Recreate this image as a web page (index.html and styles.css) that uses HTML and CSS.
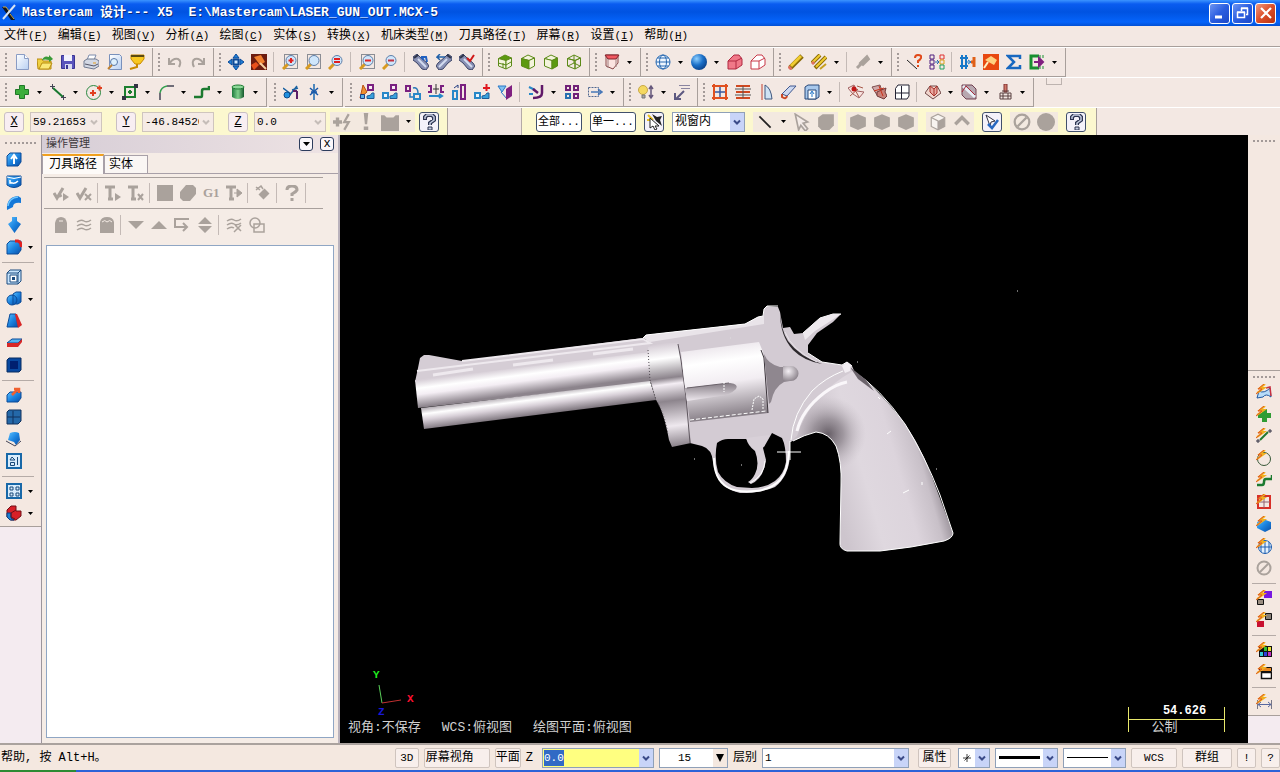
FILE: index.html
```
<!DOCTYPE html>
<html lang="zh-CN">
<head>
    <meta charset="UTF-8">
    <title>Mastercam 设计--- X5</title>
    <meta name="viewport" content="width=device-width, initial-scale=1">
    <link rel="stylesheet" href="styles.css">
    <script src="toolbars.js" defer></script>
</head>
<body>
<svg class="defs" aria-hidden="true">
    <defs>
        <linearGradient id="blue" x2="1" y2="1">
            <stop offset="0" stop-color="#5cc0ff"/>
            <stop offset="0.500" stop-color="#1c84e0"/>
            <stop offset="1" stop-color="#0a4fa8"/>
        </linearGradient>
        <linearGradient id="green" x2="1" y2="0">
            <stop offset="0" stop-color="#1d7a3c"/>
            <stop offset="0.5" stop-color="#7fd08c"/>
            <stop offset="1" stop-color="#14582c"/>
        </linearGradient>
        <linearGradient id="paper" x2="1" y2="1">
            <stop offset="0" stop-color="#ffffff"/>
            <stop offset="1" stop-color="#b9d0f2"/>
        </linearGradient>
        <radialGradient id="ball" cx="0.35" cy="0.3" r="0.8">
            <stop offset="0" stop-color="#8fd0ff"/>
            <stop offset="0.5" stop-color="#1c70c8"/>
            <stop offset="1" stop-color="#083a80"/>
        </radialGradient>
    </defs>
</svg>

<header class="title">
    <svg class="logo" viewBox="0 0 16 18">
        <path d="M1 3h4l9 13h-4z" fill="#10141c"/>
        <path d="M14 1L2 15" stroke="#d8e4f4" stroke-width="2"/>
        <path d="M2 3h3l3 4M9 10l4 5" stroke="#c9a84a" fill="none"/>
    </svg>
    <h1>Mastercam 设计--- X5&nbsp; E:\Mastercam\LASER_GUN_OUT.MCX-5</h1>
    <div class="window-buttons">
        <button aria-label="最小化"><svg viewBox="0 0 18 18"><path d="M4 13h7" stroke="#fff" stroke-width="3"/></svg></button>
        <button aria-label="还原"><svg viewBox="0 0 18 18"><path d="M3.500 8.500h7v5h-7zM3 8h8M7.500 7V4.500h6v6H12M7 4h7" stroke="#fff" fill="none" stroke-width="1.500"/></svg></button>
        <button class="close" aria-label="关闭"><svg viewBox="0 0 18 18"><path d="M4 4l10 10M14 4L4 14" stroke="#fff" stroke-width="2.200"/></svg></button>
    </div>
</header>

<nav class="menu">
    <a href="#">文件<span>(<u>F</u>)</span></a>
    <a href="#">编辑<span>(<u>E</u>)</span></a>
    <a href="#">视图<span>(<u>V</u>)</span></a>
    <a href="#">分析<span>(<u>A</u>)</span></a>
    <a href="#">绘图<span>(<u>C</u>)</span></a>
    <a href="#">实体<span>(<u>S</u>)</span></a>
    <a href="#">转换<span>(<u>X</u>)</span></a>
    <a href="#">机床类型<span>(<u>M</u>)</span></a>
    <a href="#">刀具路径<span>(<u>T</u>)</span></a>
    <a href="#">屏幕<span>(<u>R</u>)</span></a>
    <a href="#">设置<span>(<u>I</u>)</span></a>
    <a href="#">帮助<span>(<u>H</u>)</span></a>
</nav>

<div class="row">
    <div class="bar" data-tools="new open save print preview verify"></div>
    <div class="bar" data-tools="undo redo"></div>
    <div class="bar" data-tools="fit repaint | zoomwin zoomtarget zoomin | zoomout zoomhalf | tube tubeleft tubecheck"></div>
    <div class="bar" data-tools="viewtop viewfront viewright viewiso"></div>
    <div class="bar" data-tools="cplane+"></div>
    <div class="bar" data-tools="wire+ shade+ solidred outlinered"></div>
    <div class="bar" data-tools="erase eraseall+ | unerase+"></div>
    <div class="bar" data-tools="query analyze | connect paint sum run+"></div>
</div>

<div class="row row-second">
    <div class="bar" data-tools="point+ line+ circle+ rect+ fillet+ spline+ cylinder+"></div>
    <div class="bar" data-tools="trim break+"></div>
    <div class="bar" data-tools="xdynamic xmove xrotate xmirror xscale xoffset xproject | xroll+ array xstretch+"></div>
    <div class="bar" data-tools="bulb+ note"></div>
    <div class="bar" data-tools="net ruled revolve sweep extrude+ | patch trimsurf mesh | blend+ cut+ tower+"></div>
    <span class="stub"></span>
</div>

<div class="row ribbon">
    <form class="ribbon-bar coords">
        <div class="coord"><button type="button" class="key"><u>X</u></button><span class="combo off"><input aria-label="X" value="59.21653"><button type="button" data-icon="chev" aria-label="X 列表"></button></span></div>
        <div class="coord"><button type="button" class="key"><u>Y</u></button><span class="combo off"><input aria-label="Y" value="-46.84520"><button type="button" data-icon="chev" aria-label="Y 列表"></button></span></div>
        <div class="coord"><button type="button" class="key"><u>Z</u></button><span class="combo off"><input aria-label="Z" value="0.0"><button type="button" data-icon="chev" aria-label="Z 列表"></button></span></div>
        <div class="cells" data-tools="fastpoint bang config+"></div>
        <button type="button" class="box" data-icon="help" aria-label="帮助"></button>
    </form>
    <div class="ribbon-gap"></div>
    <form class="ribbon-bar picks">
        <button type="button" class="wide">全部...</button>
        <button type="button" class="wide">单一...</button>
        <button type="button" class="box" data-icon="magic" aria-label="选择"></button>
        <span class="combo window"><select aria-label="选择方式"><option>视窗内</option></select><button type="button" data-icon="chev" aria-label="展开"></button></span>
        <div class="cells" data-tools="slash+ pick grayblock"></div>
        <div class="cells" data-tools="hex hex hex"></div>
        <div class="cells" data-tools="halfcube back"></div>
        <button type="button" class="box" data-icon="pickok" aria-label="验证选择"></button>
        <div class="cells" data-tools="ban disc"></div>
        <button type="button" class="box" data-icon="help" aria-label="帮助"></button>
    </form>
</div>

<main>
    <aside class="side left">
        <div class="bar vertical" data-tools="sextrude srevolve ssweep sloft sfillet+ | sshell sboolean+ sdraft strimsolid sthick | spull sgrid ssurf slayout | sfeature+ smachine+"></div>
    </aside>

    <section class="manager">
        <header>
            <h2>操作管理</h2>
            <button data-icon="down" aria-label="选项"></button>
            <button aria-label="关闭">x</button>
        </header>
        <div class="tabs">
            <button class="active">刀具路径</button>
            <button>实体</button>
        </div>
        <div class="ops" data-tools="checkall checknone | regen regenx | verifyop post g1 feed | tool | ask |"></div>
        <div class="ops" data-tools="lock waves lockall | tridown triup insert expand | wavex overlap"></div>
        <div class="tree"></div>
    </section>

    <section class="canvas">
        <svg class="scene" viewBox="340 135 908 608">
            <defs>
                <linearGradient id="tube" gradientUnits="userSpaceOnUse" x1="530" y1="366" x2="534" y2="397">
                    <stop offset="0" stop-color="#d8d0d8"/>
                    <stop offset="0.250" stop-color="#fff"/>
                    <stop offset="0.450" stop-color="#f4eef4"/>
                    <stop offset="0.850" stop-color="#8c848c"/>
                    <stop offset="1" stop-color="#8c848c"/>
                </linearGradient>
                <linearGradient id="under" gradientUnits="userSpaceOnUse" x1="530" y1="393" x2="533" y2="416">
                    <stop offset="0" stop-color="#a69ea6"/>
                    <stop offset="0.300" stop-color="#fff"/>
                    <stop offset="0.550" stop-color="#d8d0d8"/>
                    <stop offset="1" stop-color="#787078"/>
                </linearGradient>
                <linearGradient id="collar" gradientUnits="userSpaceOnUse" x1="660" y1="343" x2="673" y2="447">
                    <stop offset="0" stop-color="#d2c9d2"/>
                    <stop offset="0.150" stop-color="#fff"/>
                    <stop offset="0.340" stop-color="#8c848c"/>
                    <stop offset="0.400" stop-color="#f4eef4"/>
                    <stop offset="0.560" stop-color="#8d858d"/>
                    <stop offset="0.800" stop-color="#eee8ee"/>
                    <stop offset="1" stop-color="#8a828a"/>
                </linearGradient>
                <linearGradient id="drum" gradientUnits="userSpaceOnUse" x1="718" y1="347" x2="728" y2="418">
                    <stop offset="0" stop-color="#eee9ee"/>
                    <stop offset="0.200" stop-color="#fff"/>
                    <stop offset="0.500" stop-color="#f2edf2"/>
                    <stop offset="1" stop-color="#847c84"/>
                </linearGradient>
                <linearGradient id="slot" x2="0" y2="1">
                    <stop offset="0" stop-color="#857d85"/>
                    <stop offset="1" stop-color="#efe9ef"/>
                </linearGradient>
                <radialGradient id="knob" cx="0.35" cy="0.35" r="0.7">
                    <stop offset="0" stop-color="#f4eff4"/>
                    <stop offset="1" stop-color="#8c848c"/>
                </radialGradient>
                <linearGradient id="grip" gradientUnits="userSpaceOnUse" x1="826" y1="470" x2="938" y2="438">
                    <stop offset="0" stop-color="#cdc5cd"/>
                    <stop offset="0.300" stop-color="#dfd8df"/>
                    <stop offset="0.600" stop-color="#dcd4dc"/>
                    <stop offset="0.800" stop-color="#c8c0c8"/>
                    <stop offset="1" stop-color="#756d75"/>
                </linearGradient>
                <radialGradient id="web" gradientUnits="userSpaceOnUse" cx="828" cy="434" r="38">
                    <stop offset="0" stop-color="#665e66"/>
                    <stop offset="0.400" stop-color="#857d85" stop-opacity="0.700"/>
                    <stop offset="1" stop-color="#bdb5bd" stop-opacity="0"/>
                </radialGradient>
            </defs>
            <!-- frame with trigger guard -->
            <path fill="#d3cbd3" d="M646 335L745 324 758 317 763 316 764 309 767 306 778 307 780 312 783 328 790 327 794 334 803 333 820 318 833 314 841 314 833 322 817 333 808 345 808 353 822 362 842 365 847 362 852 366 858 380 840 400 800 438 790 442 790 455Q789 476 775 487 762 493 740 493 716 488 713 462 712 449 702 446L690 443 680 390 648 350z"/>
            <path fill="#e9e4e9" d="M643 338L646 335 745 324 758 317 764 316 764 324 650 342z"/>
            <path fill="none" stroke="#fff" d="M643 338l3-3 99-11 13-7 5-1 1-7 3-3h11M803 333l17-15 13-4h8M808 353l14 9 20 3 5-3 5 4"/>
            <path fill="#eee9ee" d="M803 333l17-15 13-4h8l-9 6-17 11-10 9z"/>
            <path d="M780 312Q781 330 788 341 800 357 822 364 804 361 793 350 780 336 780 312z" fill="#2c282c"/>
            <path d="M785 332Q792 350 817 362" stroke="#e8e2e8" fill="none"/>
            <!-- opening inside the guard and the trigger -->
            <path d="M717 443Q722 439 728 439L746 439 764 447 772 433 782 438Q786 446 786 462 784 474 775 481 765 488 752 488L737 487Q724 483 718 472 714 458 717 443z" fill="#000"/>
            <path d="M746 438Q748 446 755 451 760 464 755 474 752 480 748 482L751 484Q764 478 766 460L763 448 770 435z" fill="#d8d0d8"/>
            <path d="M765 461Q764 476 750 483" stroke="#fff" fill="none"/>
            <path d="M714 458Q714 479 727 487 737 493 756 491 772 489 780 480 788 471 789 451" fill="none" stroke="#fff" stroke-width="2"/>
            <!-- handle -->
            <path fill="url(#grip)" d="M790 442Q800 405 840 374L850 368Q875 386 899 416 921 444 935 485L953 533Q953 538 944 541 910 548 880 551L847 551Q839 549 840 542L841 485Q842 462 836 446 829 433 816 432 804 435 790 442z"/>
            <path fill="url(#web)" d="M790 442Q800 405 840 374L850 368Q875 386 899 416V485H841Q842 462 836 446 829 433 816 432 804 435 790 442z"/>
            <path fill="#d3cbd3" d="M790 442Q792 405 822 380L848 364 853 371Q810 395 797 436z"/>
            <path fill="none" stroke="#fff" d="M791 440Q793 413 812 391 825 378 843 371"/>
            <path fill="none" stroke="#faf7fa" stroke-width="3" d="M797 431Q802 410 824 393 836 384 847 382"/>
            <path fill="none" stroke="#fff" d="M853 371Q880 388 905 424 925 456 940 495L953 533Q953 538 944 541 910 548 880 551L847 551Q839 549 840 542L841 485Q842 462 836 446 829 433 816 432 804 435 793 441"/>
            <path d="M850 367l8 12 16 12-9-12z" fill="#6c646c"/>
            <path d="M842 366l5-4 4 3-1 6-5 2z" fill="#f2edf2"/>
            <path d="M887 434l4-3M903 493l6-3M922 482v3M878 397l2 2" stroke="#fff"/>
            <!-- barrel -->
            <path fill="#d5cdd5" d="M418 368L420 358 424 355 429 355 462 361 643 338 650 343 650 356 415 382z"/>
            <path d="M462 361L643 339 650 343 417 371" fill="none" stroke="#eee9ee" stroke-width="2"/>
            <path d="M433 375l40-6M513 365l40-5M593 354l40-5" stroke="#eee9ee" stroke-width="3"/>
            <path fill="url(#tube)" d="M415 380L650 352 652 382 418 408Z"/>
            <path fill="url(#under)" d="M421 408L650 381 656 400 424 429Z"/>
            <path fill="url(#collar)" d="M648 347Q660 342 678 343L684 380 691 443 672 447 669 440Q664 412 656 400L650 380z"/>
            <path d="M648 350l2 30 6 20q8 12 12 34" fill="none" stroke="#4f484f" stroke-dasharray="1 2"/>
            <path d="M678 344l3 16 5 37 4 46" fill="none" stroke="#5f575f"/>
            <!-- cylinder -->
            <path fill="url(#drum)" d="M681 352L759 342 763 352 768 413 690 422 684 380z"/>
            <path fill="url(#slot)" d="M685 388L730 383Q739 384 736 389 730 395 720 396L687 401z"/>
            <path d="M687 388l42-5" stroke="#6a626a"/>
            <path d="M690 420l76-9" stroke="#fff" stroke-dasharray="4 2"/>
            <path d="M752 410l2-11 5-3 4 3v10M724 382v10" stroke="#fff" stroke-dasharray="2 1" fill="none"/>
            <path d="M761 350l3 8 4 55" fill="none" stroke="#3c363c"/>
            <path d="M764 354Q768 364 780 367H790V381L784 382Q774 387 771 402L769 404z" fill="#8f878f"/>
            <path d="M783 366h8a7 7 0 0 1 0 15h-8z" fill="url(#knob)"/>
            <path d="M777 452h24M790 441v19" stroke="#fff"/>
            <path d="M1017 291h1M694 459h1M741 465h1M730 338h1M857 362h1M936 469h1" stroke="#ddd"/>
            <!-- view axes -->
            <path d="M382 703l-3-18" stroke="#5ad05a"/>
            <path d="M382 703l19-3" stroke="#c03030"/>
            <g class="axes">
                <text x="373" y="678" fill="#20f020">Y</text>
                <text x="407" y="702" fill="#ff1030">X</text>
                <text x="378" y="715" fill="#1818d8">Z</text>
            </g>
        </svg>
        <p class="plane-info"><span>视角:不保存</span><span>WCS:俯视图</span><span>绘图平面:俯视图</span></p>
        <div class="scale">
            <b>54.626</b>
            <i></i>
            <span>公制</span>
        </div>
    </section>

    <aside class="side right">
        <div class="bar vertical empty"></div>
        <div class="bar vertical" data-tools="asurf aplus aline acircle aspline anet acube aglobe ban | apurple ared | apalette awindow | adim"></div>
    </aside>
</main>

<footer class="status">
    <span class="hint">帮助, 按 Alt+H。</span>
    <button class="flat d3">3D</button>
    <button class="flat gview">屏幕视角</button>
    <button class="flat plane">平面</button>
    <label for="depth">Z</label>
    <span class="combo depth"><span class="field"><mark>0.0</mark><input id="depth"></span><button data-icon="chev" aria-label="Z 列表"></button></span>
    <span class="combo color"><input aria-label="颜色" value="15"><button data-icon="tri" aria-label="颜色列表"></button></span>
    <label for="level">层别</label>
    <span class="combo level"><input id="level" value="1"><button data-icon="chev" aria-label="层别列表"></button></span>
    <button class="flat attrs">属性</button>
    <span class="combo style"><button class="sample" data-icon="star" aria-label="点样式"></button><button data-icon="chev" aria-label="点样式列表"></button></span>
    <span class="combo thick"><button class="sample" aria-label="线宽"><i></i></button><button data-icon="chev" aria-label="线宽列表"></button></span>
    <span class="combo thin"><button class="sample" aria-label="线型"><i></i></button><button data-icon="chev" aria-label="线型列表"></button></span>
    <button class="flat wcs">WCS</button>
    <button class="flat groups">群组</button>
    <button class="flat mini">!</button>
    <button class="flat mini">?</button>
</footer>
<div class="taskbar"><span></span></div>
</body>
</html>
```

FILE: styles.css
```
* {
    box-sizing: border-box;
}

body {
    margin: 0;
    height: 100vh;
    display: flex;
    flex-direction: column;
    overflow: hidden;
    background: #f3e8e3;
    color: #000;
    font: 12px/16px "Liberation Mono", "Noto Sans CJK SC", monospace;
}

h1, h2, p {
    margin: 0;
}

button, input, select {
    font: inherit;
    color: inherit;
    margin: 0;
    padding: 0;
    border: 0;
    border-radius: 0;
    background: none;
    min-width: 0;
}

select {
    appearance: none;
}

svg {
    display: block;
    flex: none;
}

.defs {
    position: absolute;
    width: 0;
    height: 0;
}

/* title */
.title {
    display: flex;
    flex: none;
    align-items: center;
    height: 26px;
    padding: 0 4px 0 1px;
    background: linear-gradient(#3c94ff, #0a5cf0 4px, #0053e1 12px, #0564fb 22px, #0350d4);
    color: #fff;
}

.title .logo {
    width: 16px;
    height: 18px;
}

.title h1 {
    flex: 1;
    padding-left: 5px;
    font-size: 13px;
    font-weight: bold;
    text-shadow: 1px 1px #0a2c80;
    white-space: nowrap;
}

.window-buttons {
    display: flex;
    gap: 2px;
}

.window-buttons button {
    display: flex;
    align-items: center;
    justify-content: center;
    width: 21px;
    height: 21px;
    border: 1px solid #fff;
    border-radius: 3px;
    background: linear-gradient(135deg, #6d95f2, #2a5de0 50%, #1c48c8);
}

.window-buttons .close {
    background: linear-gradient(135deg, #f09a80, #dc4e28 50%, #b83210);
}

.window-buttons svg {
    width: 18px;
    height: 18px;
}

/* menu */
.menu {
    display: flex;
    flex: none;
    gap: 10px;
    height: 21px;
    padding: 2px 4px;
    border-bottom: 1px solid #a89f9b;
}

.menu a {
    color: inherit;
    text-decoration: none;
    white-space: nowrap;
}

.menu span {
    font-size: 11px;
}

/* toolbars */
.row {
    display: flex;
    flex: none;
    height: 30px;
    border-top: 1px solid #fff;
}

.row-second {
    gap: 2px;
}

.row-second .bar:nth-child(n+4) {
    margin-left: -2px;
}

.bar {
    position: relative;
    display: flex;
    align-items: center;
    padding: 0 4px 0 10px;
    border-right: 1px solid #a89f9b;
    border-bottom: 1px solid #a89f9b;
}

.bar::before {
    content: "";
    position: absolute;
    left: 5px;
    top: 5px;
    bottom: 5px;
    border-left: 2px dotted #a39a98;
}

.tool {
    display: flex;
    align-items: center;
}

.tool button {
    display: flex;
    align-items: center;
    justify-content: center;
    width: 23px;
    height: 22px;
}

.tool .drop {
    width: 13px;
}

.tool svg {
    width: 16px;
    height: 16px;
}

.tool .drop svg {
    width: 5px;
    height: 3px;
}

.sep {
    width: 8px;
    height: 20px;
    border-left: 1px solid #c4bab6;
    background: none;
    margin-left: 3px;
    margin-right: -3px;
}

.stub {
    width: 16px;
    height: 7px;
    margin-left: 10px;
    border: 1px solid #bdb3af;
    border-top: 0;
}

/* coordinate and selection ribbon */
.ribbon {
    height: 28px;
}

.ribbon-bar {
    display: flex;
    align-items: center;
    background: #fcf8cf;
    border-right: 1px solid #a89f9b;
}

.coords {
    gap: 4px;
    padding: 0 8px 0 4px;
}

.coord {
    display: flex;
    gap: 6px;
}

.coord + .coord {
    margin-left: 10px;
}

.key, .box {
    display: flex;
    align-items: center;
    justify-content: center;
    width: 20px;
    height: 20px;
    border: 1px solid #c9bfc4;
    border-radius: 3px;
    background: #f8eef2;
}

.box {
    border-color: #41506c;
    background: #f4f2fa;
}

.box svg {
    width: 16px;
    height: 16px;
}

.combo {
    display: flex;
    height: 20px;
    border: 1px solid #8fa0b8;
    background: #fff;
}

.combo input, .combo select {
    flex: 1;
    width: 0;
    padding-left: 2px;
}

.combo button[data-icon] {
    display: flex;
    align-items: center;
    justify-content: center;
    width: 14px;
    background: #c8d4f8;
    color: #3a4a88;
}

.combo button[data-icon] svg {
    width: 8px;
    height: 8px;
}

.combo.off {
    width: 72px;
    border-color: #cfc5be;
    background: #f5ebe6;
    font-size: 11px;
}

.combo.off button[data-icon] {
    background: none;
    color: #c5bdb8;
}

.cells {
    display: flex;
}

.cells .tool {
    height: 20px;
    background: #f3e9e0;
}

.cells .tool button {
    width: 24px;
}

.cells .tool svg {
    width: 18px;
    height: 18px;
}

.cells .tool .drop {
    width: 13px;
}

.cells .tool .drop svg {
    width: 5px;
    height: 3px;
}

.ribbon-gap {
    width: 74px;
    border-right: 1px solid #b5aba7;
}

.picks {
    gap: 8px;
    padding: 0 10px 0 14px;
}

.wide {
    width: 46px;
    height: 20px;
    border: 1px solid #41506c;
    border-radius: 3px;
    background: #fff;
    font-size: 11px;
    white-space: nowrap;
    overflow: hidden;
}

.window {
    width: 73px;
}

/* work area */
main {
    display: flex;
    flex: 1;
    min-height: 0;
}

.side {
    display: flex;
    flex-direction: column;
    flex: none;
    background: #f4ebf0;
}

.left {
    width: 41px;
}

.right {
    width: 32px;
}

.vertical {
    flex-direction: column;
    align-items: flex-start;
    padding: 13px 0 2px 2px;
    background: #f4e8e1;
    border-right: 0;
}

.right .vertical {
    padding-top: 10px;
    padding-left: 4px;
}

.right .empty {
    height: 236px;
}

.vertical::before {
    left: 5px;
    right: 5px;
    top: 7px;
    bottom: auto;
    border-left: 0;
    border-top: 2px dotted #a39a98;
}

.right .vertical::before {
    top: 5px;
}

.vertical .tool {
    height: 22px;
}

.vertical .tool .drop {
    width: 11px;
}

.vertical .sep {
    width: 32px;
    height: 8px;
    border-left: 0;
    border-top: 1px solid #b5aba7;
    margin: 4px 0 -4px;
}

.right .vertical .sep {
    width: 24px;
}

.manager {
    display: flex;
    flex-direction: column;
    flex: none;
    width: 299px;
    padding-bottom: 5px;
    border-left: 1px solid #9c959c;
    border-right: 2px solid #b9b2bc;
    background: #f5ece6;
}

.manager header {
    display: flex;
    align-items: center;
    gap: 7px;
    height: 18px;
    padding: 0 4px;
    background: linear-gradient(90deg, #d6cdd6, #eee3e4);
}

.manager h2 {
    flex: 1;
    font-size: 11px;
    font-weight: normal;
    color: #3c383c;
}

.manager header button {
    display: flex;
    align-items: center;
    justify-content: center;
    width: 14px;
    height: 14px;
    border: 1px solid #2c3c5c;
    border-radius: 3px;
    background: #fbf7fa;
    line-height: 12px;
}

.manager header svg {
    width: 7px;
    height: 4px;
}

.tabs {
    display: flex;
    align-items: flex-end;
    height: 21px;
    border-bottom: 1px solid #a8a0a8;
}

.tabs button {
    width: 44px;
    height: 18px;
    padding-right: 10px;
    border: 1px solid #a8a0a8;
    border-bottom: 0;
    background: #faf6f4;
    white-space: nowrap;
}

.tabs .active {
    width: 62px;
    height: 20px;
    padding: 0;
    margin-bottom: -1px;
    border-top: 2px solid #f0a020;
    background: #fdfaf8;
}

.ops {
    display: flex;
    align-items: center;
    height: 31px;
    margin: 3px 15px 0 2px;
    padding-left: 5px;
    border-top: 1px solid #a8a09c;
}

.ops + .ops {
    margin-top: 0;
    height: 32px;
}

.ops .sep {
    width: 6px;
    margin: 0 -2px 0 2px;
}

.tree {
    flex: 1;
    margin: 5px 4px 0 4px;
    border: 1px solid #8fa6c4;
    background: #fff;
}

.canvas {
    position: relative;
    flex: 1;
    min-width: 0;
    background: #000;
    color: #d0d0d0;
}

.scene {
    width: 100%;
    height: 100%;
}

.axes {
    font: bold 11px "Liberation Mono", monospace;
}

.plane-info {
    position: absolute;
    left: 8px;
    bottom: 7px;
    display: flex;
    gap: 21px;
    font-size: 13px;
    white-space: nowrap;
}

.scale {
    position: absolute;
    right: 23px;
    bottom: 7px;
    display: grid;
    width: 97px;
    text-align: center;
}

.scale b {
    padding-left: 16px;
    color: #fff;
}

.scale i {
    height: 1px;
    background: #e8e86c;
}

.scale span {
    padding-right: 24px;
    font-size: 13px;
}

.scale::before {
    content: "";
    position: absolute;
    inset: 4px 0;
    border: solid #e8e86c;
    border-width: 0 1px;
}

/* status bar */
.status {
    display: flex;
    flex: none;
    align-items: center;
    gap: 5px;
    height: 27px;
    padding-left: 1px;
    border-top: 2px solid #aaa29e;
    background: #f4e8e0;
    font-size: 11px;
    white-space: nowrap;
}

.status .hint {
    flex: 1;
    font-size: 12px;
}

.status label {
    font-size: 12px;
}

.flat {
    height: 20px;
    border: 1px solid #cfc4be;
    border-radius: 2px;
    background: #f8efec;
}

.d3 {
    width: 24px;
}

.gview {
    width: 66px;
    padding-right: 14px;
    font-size: 12px;
}

.plane {
    width: 26px;
    font-size: 12px;
}

.depth {
    width: 112px;
    margin-left: 4px;
}

.depth .field {
    display: flex;
    flex: 1;
    min-width: 0;
    padding: 1px;
    background: #ffff80;
}

.depth .field input {
    padding: 0;
}

.depth mark {
    background: #316ac5;
    color: #fff;
}

.color {
    width: 69px;
}

.color input {
    padding-left: 18px;
}

.combo.color button {
    background: #f4e8e0;
    color: #000;
}

.level {
    width: 147px;
}

.attrs {
    width: 33px;
    margin: 0 2px 0 4px;
    font-size: 12px;
}

.combo .sample {
    flex: 1;
    display: flex;
    align-items: center;
    justify-content: center;
}

.combo .sample[data-icon] {
    background: #fff;
    color: #000;
}

.style {
    width: 32px;
}

.thick, .thin {
    width: 63px;
}

.sample i {
    width: 41px;
    border-top: 3px solid #000;
}

.thin .sample i {
    border-top-width: 1px;
}

.wcs {
    width: 46px;
}

.groups {
    width: 50px;
    font-size: 12px;
}

.mini {
    width: 19px;
}

.taskbar {
    flex: none;
    height: 2px;
    background: #2c62d8;
}

.taskbar span {
    display: block;
    width: 76px;
    height: 2px;
    background: #2e8a34;
}
```

FILE: toolbars.js
```
const G = '#aaa29c'

const p = (d, stroke, fill, w) =>
    `<path d="${d}" stroke="${stroke || 'none'}" fill="${fill || 'none'}" stroke-width="${w || 1}"/>`

const cube = (line, top, left, right, base) =>
    p('M1.500 4.500L8 1l6.500 3L9 6.500z', line, top || base) +
    p('M1.500 4.500L9 6.500V15l-7.500-3z', line, left || base) +
    p('M9 6.500l5.500-2.500v8L9 15z', line, right || base)

const lens = (sign, box) =>
    (box ? '<rect x="2.500" y=".5" width="13" height="14" fill="none" stroke="#234" stroke-dasharray="1 1"/>' : '') +
    p('M6 10l-5 5', '#d89a20', '', 3) +
    '<circle cx="9" cy="6.500" r="5" fill="#cfe6fb" stroke="#5f7fa8"/>' + sign

const tube = mark =>
    p('M0 3l4-3 3 3 7 6 2 3-3 4-4-1-5-6-4-3z', '#3c4466', '#8890b4') +
    p('M5 5l8 8', '#d4dcf0', '', 2) + p('M1 4l4-3', '#30364c', '', 2) + mark

const bolt = p('M9 0L4 4h4L1 9', '#f0b020', '', 2) + p('M8 0L2 5h4L0 10', '#e05a20')

const block = p('M1 5l3-3h11v9l-3 4H1z', '#0a4a98', 'url(#blue)')

const xform = p('M9 1h5v5H9z', '#7a2080', '#f8ecf4', 2)
const xfoot = p('M8 14.500V12q4 0 5-3h2v5.500z', '#1c5c98', '#38a0dc')

const icons = {
    new: p('M2.500 .5h8l4 4v11h-12z', '#8a9cc4', 'url(#paper)') + p('M10.500 .5v4h4', '#8a9cc4', '#fff'),
    open: p('M0 5h5l1 2h8v8H1z', '#b98c10', '#f0d040') + p('M2 15l3-6h10l-3 6z', '#b98c10', '#fbe878') + p('M5 6q2-5 7-3V1l4 4-4 3V6q-4-1-7 0z', '', '#3a9a38'),
    save: p('M1.500 1.500h13v13h-13z', '#3a3494', '#5a54bc') + p('M4 1h8v6H4z', '', '#f2f2fc') + p('M5 10h7v5H5z', '', '#d8daf0') + p('M6 11h2v4H6z', '', '#3a3494'),
    print: p('M4 6l2-5h7l-2 5z', '#7c8cac', '#fff') + p('M1 7l3-2h9l3 2v5l-5 3-10-2z', '#707a90', '#d3d8e4') + p('M2 10l9 2 4-2', '#556') + p('M10 9h3', '#e8a020'),
    preview: p('M3.500 .5h10l2 2v13h-12z', '#7890bc', 'url(#paper)') + '<circle cx="8" cy="8" r="3.500" fill="#dff0fc" stroke="#5878a8"/>' + p('M6 11l-4 4', '#c08030', '', 2),
    verify: p('M2 1h13v4l-4 5H6L2 5z', '#c88a00', '#f8c820') + p('M2 2h13', '#5c4a10', '', 2) + p('M8 10v3L1 15', '#c88a00', '', 2),
    undo: p('M2 4v6h6M3 9q3-5 8-4 4 2 1 8', G, '', 2),
    redo: p('M14 4v6H8M13 9q-3-5-8-4-4 2-1 8', G, '', 2),
    fit: p('M8 0l3 4H5zM8 16l3-4H5zM0 8l4-3v6zM16 8l-4-3v6z', '#0c4a98', '#2080d8') + p('M5.500 5.500h5v5h-5z', '#0c4a98', '#d4ecff', 2),
    repaint: p('M0 0h16v16H0z', '', '#6c1c10') + p('M3 3l7-2 4 7-5 3z', '', '#f08030') + p('M0 11l5-3 3 3-5 5z', '', '#e8501c') + p('M9 9l6 6', '#f8d0a0', '', 2),
    zoomwin: lens(p('M9 4v5M6.500 6.500h5', '#e02020', '', 2), true),
    zoomtarget: lens('', true),
    zoomin: lens(p('M6 5h6M6 8h6', '#e02020', '', 2)),
    zoomout: lens(p('M6 6.500h6', '#e02020', '', 2), true),
    zoomhalf: lens(p('M6 6.500h6', '#c03040', '', 2)),
    tube: tube(p('M8 3h5l1 5M8 3l3 3', '#2060c0', '', 2)),
    tubeleft: `<g transform="matrix(-1 0 0 1 16 0)">${tube('')}</g>` + p('M9 3H1l3-3M1 3l3 3', '#2060a8', '', 1.5),
    tubecheck: tube(p('M8 4l3 3 4-6', '#d01818', '', 2)),
    viewtop: cube('#5c8a18', '#5c9a10', '#f4f4dc', '#f4f4dc') + p('M6 9v5M1 9l8 2 5-3', '#5c8a18'),
    viewfront: cube('#5c8a18', '#f4f4dc', '#5c9a10', '#f4f4dc'),
    viewright: cube('#5c8a18', '#f4f4dc', '#f4f4dc', '#5c9a10'),
    viewiso: cube('#5c8a18') + p('M8 1v8L2 12M8 9l6 3', '#5c8a18'),
    cplane: p('M2 1h12v8l-5 6-7-3z', '#884848', '#fbe4e0') + p('M1 1h14l-3 4H4z', '#802028', '#f05860') + p('M4 5v9M12 5v8', '#a08080'),
    wire: '<circle cx="8" cy="8" r="7" fill="#eef6ff" stroke="#2868b0"/><ellipse cx="8" cy="8" rx="3.500" ry="7" fill="none" stroke="#2868b0"/>' + p('M1 8h14M2.500 4h11M2.500 12h11', '#2868b0'),
    shade: '<circle cx="8" cy="8" r="8" fill="url(#ball)"/>',
    solidred: p('M1 7l6-6h5l3 4v6l-6 4H1z', '#b02840', '#f07888') + p('M1 7h8l6-3M9 7v8', '#b02840'),
    outlinered: p('M1 7l6-6h5l3 4v6l-6 4H1z', '#c83848', '#fff') + p('M1 7h8l6-3M9 7v8', '#c83848'),
    erase: p('M2 14L14 2', '#8a6a08', '', 5) + p('M3 12L13 2', '#f0cc30', '', 3) + p('M1 15l2-2', '#e07060', '', 4),
    eraseall: p('M1 9l8-8M4 14L15 3', '#8a6a08', '', 4) + p('M1 9l8-8M5 13L15 3', '#f0cc30', '', 2) + p('M9 15l6-5', '#c8a020', '', 2) + p('M1 8l2 2', '#e07060', '', 3),
    unerase: p('M2 14l5-5', G, '', 3) + p('M5 9l7-7 2 3-6 6z', G, G, 2),
    query: p('M1 6l10 9', '#222') + p('M9 4q0-3 3-3 4 0 3 3-1 2-3 3v2M12 11v2', '#e04818', '', 2),
    analyze: p('M1 1h4v4H1zM1 6h4v4H1zM1 11h4v4H1z', '#502080') + p('M11 1h4v4h-4z', '#e03030') + p('M11 6h4v4h-4z', '#d8a018') + p('M11 11h4v4h-4z', '#20a060') + p('M6 8h4M8 6l2 2-2 2', '#2868b0'),
    connect: p('M2 1v14M6 1v14M0 4h8M0 12h8', '#1878c8', '', 2) + p('M6 8h5M8 6l3 2-3 2', '#1878c8') + p('M14 3v10M11 8h3', '#e06018', '', 3),
    paint: p('M0 0h16v16H0z', '', '#e84810') + p('M2 6l6-4 6 4-3 5z', '', '#ffd080') + p('M5 8l-4 6', '#fff0c0', '', 2),
    sum: p('M14 5V2H2l6 6-6 6h12v-3', '#1868c0', '', 2.5),
    run: p('M10 2H2v12h8', '#189030', '', 3) + p('M5 8h8M10 4l4 4-4 4z', '#802080', '#802080', 2) + p('M11 1v3M14 1v3M11 12v3M14 12v3', '#189030'),

    point: p('M5.500 1.500h5v4h4v5h-4v4h-5v-4h-4v-5h4z', '#207828', '#3cae3c'),
    line: p('M3 4l10 9', '#187830', '', 2) + p('M0 2.500h5M2.500 0v5M11 13.500h5M13.500 11v5', '#445'),
    circle: '<circle cx="7.500" cy="8.500" r="7" fill="none" stroke="#2a8840"/>' + p('M4 9h6M7 6v6M11 4h5M13.500 1.500v5', '#e04020', '', 2),
    rect: p('M3 3h10v10H3z', '#1c8030', '', 2) + p('M6 8h4M8 6v4', '#1c8030', '', 2) + p('M0 14h4M12 2h4', '#334', '', 4),
    fillet: p('M2 9q1-6 7-7', '#30a04c', '', 1.5) + p('M9 2h7M2 9v7', '#445', '', 1.5),
    spline: p('M0 13h7q1 0 1-2V7q0-2 2-2h5V2', '#1c7a30', '', 2.5),
    cylinder: p('M2 3v10q6 4 12 0V3z', '', 'url(#green)') + '<ellipse cx="8" cy="3" rx="6" ry="2" fill="#8ed89a" stroke="#1c7a30"/>',
    trim: p('M0 4l8 6M6 12L14 2M9 6l6-2', '#1860a0', '', 1.5) + '<circle cx="4" cy="11" r="3" fill="#2090e0" stroke="#0c4a88"/>' + p('M10 7h4M14 7v8', '#5c2068', '', 2),
    break: p('M8 0v16', '#1868b0', '', 1.5) + p('M4 4l8 7M4 11l8-7M5 8h6', '#1858a8', '', 1.5),
    xdynamic: xform + p('M1 14L4 1l4 7z', '#b85010', '#f09030') + xfoot + p('M1.500 10.500h4v4h-4z', '#203c80', '#58b0e8'),
    xmove: xform + p('M1 9h5v5H1z', '#2888c8', '#eef6fc', 2) + xfoot,
    xrotate: p('M1 2h4v5H1z', '#7a2080', '', 2) + p('M9 10h6v5H9z', '#2888c8', '', 2) + p('M8 4q5-1 5 5M5 9v4h3', '#2878b8', '', 1.5),
    xmirror: p('M0 2h3v6H0M16 2h-3v6h3', '#7a2080', '', 2) + p('M8 0v10M5 5h6', '#333') + p('M1 12h13M11 10l3 2-3 2', '#2888c8', '', 2),
    xscale: p('M2 7h4v8H2z', '#2888c8', '', 2) + p('M10 1h4v14h-4z', '#7a2080', '', 2) + p('M3 4l4-3v3', '#203c80'),
    xoffset: p('M1 9h5v5H1z', '#2888c8', '#eef6fc', 2) + xfoot + p('M9 4h7M12.500 0v7', '#e01820', '', 2),
    xproject: p('M1 2h8L5 8zM4 8l6 7', '#2878c8', '#80c0f0') + p('M9 5l6-4v11l-6 4z', '', '#802080'),
    xroll: p('M1 3l6 3M5 10H1', '#2888c8', '', 2) + p('M14 1v8q0 5-9 5M5 5l5 4', '#601868', '', 2.5),
    array: p('M2 2h4v4H2zM2 10h4v4H2z', '#2870b0', '', 2) + p('M10 2h4v4h-4zM10 10h4v4h-4zM2 2h4v4H2z', '#702078', '', 2),
    xstretch: '<rect x="1.500" y="3.500" width="10" height="9" fill="none" stroke="#506890" stroke-dasharray="2 1"/>' + p('M4 8h10M11 5l4 3-4 3', '#4878b8', '', 1.5),
    bulb: '<circle cx="5" cy="6" r="4.500" fill="#f4d860" stroke="#c8a848"/>' + p('M4 11h3v3H4z', '#777', '#aaa') + p('M13 3v10M11 5l2-3 2 3M11 11l2 3 2-3', '#66587c', '', 1.5),
    note: p('M2 15l8-8M1 9v6h6', '#5c5880', '', 2) + p('M5 1.500h11M7 4.500h9', '#8a84a0'),
    net: p('M2 0v16M14 0v16M0 2h16M0 14h16', '#e05020', '', 2) + p('M8 3v10M3 8h10', '#3858a0', '', 1.5),
    ruled: p('M1 2h14M1 14h14M1 8h14', '#d04820', '', 2) + p('M0 5h16M0 11h16M8 2v12', '#555'),
    revolve: p('M7 1q6 3 7 14H7z', '#405880', '#cfe2f4') + p('M4 0v16', '#c04030'),
    sweep: p('M1 10l8-8h6l-9 10z', '#405890', '#cdd8f0') + p('M1 10v3q4 3 5-1', '#c84828', '', 2),
    extrude: p('M1 3l3-2h11v12l-3 2H1z', '#284878', '#a8c8ec') + p('M4 6h8v9H4z', '#284878', '#fff') + p('M8 13V8M6 10l2-3 2 3', '#2878c8'),
    patch: p('M0 4l6-3 3 6 7 1-5 6-6-4z', '#a06060', '#f8e4e0') + p('M2 12l8-7M9 2l6 2M5 2l6 11', '#a85848') + '<circle cx="6" cy="5" r="2.500" fill="#c01818"/>',
    trimsurf: p('M1 3l8-2 2 6-5 4z', '#805050', '#d0a8a8') + p('M6 8l9-4-1 4 2 4-3 3-7-3z', '#703838', '#c88078') + p('M3 7l10-3M8 2l4 10', '#c83018'),
    mesh: p('M1.500 4.500L4 1h11v11l-2 3H1.500zM7.500 2v13M1 9h14', '#223', '#fff'),
    blend: p('M0 9l5-7h7l4 7-8 6z', '#704848', '#f0d4cc') + p('M5 2v6l4 4V5zM9 5l3-3v7l-3 3', '#a83028', '#e8a8a0'),
    cut: p('M1 1h10l4 4v10H5l-4-4z', '#704050', '#b8a8b0') + p('M2 2l12 11', '#e8f0f8', '', 3) + p('M1 8l4-6 9 9', '#a82838'),
    tower: p('M7 0h3v8H7z', '#803030', '#d07868') + p('M3 9h11v6H3zM3 12h11M6 9v6M11 9v6M5 7h7', '#584040'),

    fastpoint: p('M0 8h8M4 4v8', G, '', 3) + p('M14 1l-4 7h4l-4 7', G, '', 2),
    bang: p('M6 0h4l-1 10H7zM6 12h4v3H6z', '', G),
    config: p('M0 2h3l2 2h6l2-2h3v14H0z', '', G),
    help: p('M4 6V3l2-2h5l2 2v3l-4 3v2', '#2c3450', '', 4) + p('M4 5V3l2-2h5l2 2v3l-4 3v2', '#c4cce0', '', 1.5) + p('M7 13h4v3H7z', '#2c3450', '#c4cce0'),
    magic: p('M6 0l5 3 5-1-2 4 2 6-6-5z', '', '#222') + p('M2 1l5 5M1 6h5', '#e8c020', '', 2) + p('M4 4l9 8-4 0 2 3-2 1-2-4-3 2z', '#222', '#fff'),
    slash: p('M3 3l10 10', '#222', '', 1.5),
    pick: p('M2 1l11 7-4 1 4 5-2 2-4-5-2 4z', G, '#f4ece8', 1.5),
    grayblock: p('M1 4l4-3h10v10l-4 4H4l-3-3z', '', G),
    hex: p('M8 1l7 3v8l-7 3-7-3V4z', '', G),
    halfcube: p('M2 4l6-3 6 3v8l-6 3-6-3z', G, '#f8f4f0') + p('M8 7l6-3v8l-6 3z', '', G) + p('M2 4l6 3v8', G),
    back: p('M2 10L8 4l6 6', G, '', 3),
    pickok: p('M2 1l9 6-4 1-1 4z', '#334', '#fff') + p('M4 10l4 4 6-8', '#2868c0', '', 2.5),
    ban: '<circle cx="8" cy="8" r="6.500" fill="none" stroke="#aaa29c" stroke-width="2"/>' + p('M4 12l8-8', G, '', 2),
    disc: '<circle cx="8" cy="8" r="8" fill="#aaa29c"/>',

    sextrude: block + p('M8 13V6M5 8l3-4 3 4', '#fff', '', 2),
    srevolve: p('M1 3v9q7 5 14 0V3z', '#0a4a98', 'url(#blue)') + p('M1 4q7 3 14 0', '#fff') + p('M4 9q4 3 8-1M4 7v3h3', '#fff', '', 1.5),
    ssweep: p('M1 15Q0 2 12 1l3 2v5Q7 7 7 12z', '', '#1478d8') + p('M2 11Q3 3 12 2', '#70c8ff', '', 1.5),
    sloft: p('M6 0h5v4l4 3-6.500 9L2 7l4-3z', '', 'url(#blue)'),
    sfillet: block + p('M9 2h3q4 2 3 6', '#e02020', '', 3),
    sshell: p('M1 4l3-3h11v11l-3 3H1z', '#1c4c80', '#c8e4fc') + p('M4 6h7v7H4z', '#1c4c80', '#fff') + p('M6 8h3v3H6z', '', '#1c4c80') + p('M1 4h11v11M12 4l3-3', '#1c4c80'),
    sboolean: p('M7 3l3-2h5v10l-3 2H7z', '#0a4a98', 'url(#blue)') + '<circle cx="6" cy="9" r="5" fill="url(#blue)" stroke="#0a4a98"/>' + p('M7 4v10', '#0a4a98'),
    sdraft: p('M4 1h6l2 13H1z', '#0a4a98', 'url(#blue)') + p('M9 1h2l5 11-4 3z', '', '#d82828'),
    strimsolid: p('M1 8l5-4h10l-4 4z', '#0a4a98', '#58b4f0') + p('M1 8h11l4-4v3l-4 5H1z', '', '#d82828'),
    sthick: p('M1 3l2-2h12v12l-2 2H1z', '#082c60', '#0848a0') + p('M4 4h8v8H4z', '', '#001f70'),
    spull: p('M1 8l3-3h11v6l-3 4H1z', '#0a4a98', 'url(#blue)') + p('M6 8l6-6M8 2h5v4', '#f06030', '', 2.5),
    sgrid: p('M1 3l2-2h12v11l-3 3H1z', '#10305c', '#2468a8') + p('M7 2v13M1 8h13', '#10305c'),
    ssurf: p('M0 10l9 5 6-5', '#445') + p('M4 2q5-2 9 0l1 7-4 5-2-3-6-2z', '', 'url(#blue)'),
    slayout: p('M1 1h14v14H1z', '#1868a8', '#d8ecfc', 2) + p('M4 7l2-3 3 3zM4.500 9.500h4v3h-4zM11.500 4v8', '#184878'),
    sfeature: p('M1 1h14v14H1z', '#1868a8', '#d8ecfc', 2) + p('M4 4h3v3H4zM4 10h3v3H4zM10 4h3v3h-3zM10 10h3v3h-3z', '#184878'),
    smachine: p('M1 5l4-4h5v5h5v5l-5 4H5l-4-3z', '#701018', '#d82028') + p('M1 8h4v5l3 2H4l-3-3z', '#083c80', '#2080d0') + p('M5 8l5-3M5 8v4l4 2', '#701018'),

    asurf: p('M1 14l2-7q5 3 11-3l1 9q-5-4-8 0z', '#2058a0', '#b8dcf8') + p('M10 4l4-1 1 9', '#c83040', '', 1.5) + bolt,
    aplus: p('M6 3h5v4h4v5h-4v4H6v-4H2V7h4z', '', '#2f9c34') + bolt,
    aline: p('M4 12l8-8', '#207830', '', 2) + p('M12 3h4M14 1v4M0 13h4M2 11v4', '#334') + bolt,
    acircle: '<circle cx="8" cy="9" r="6.500" fill="none" stroke="#385838"/>' + bolt,
    aspline: p('M1 13h5q2 0 2-3 0-3 2-3h6V3', '#1c7a30', '', 2.5) + bolt,
    anet: p('M2 2h12v12H2z', '#d83028', '', 2) + p('M8 2v12M2 8h12', '#906070') + bolt,
    acube: p('M1 6l6-3 8 3v7l-6 3-8-4z', '', 'url(#blue)') + bolt,
    aglobe: '<circle cx="9" cy="9" r="6.500" fill="#e4f0fc" stroke="#2060b0"/>' + p('M2 9h14M9 2v14M5 4v10M13 4v10', '#2060b0') + bolt,
    apurple: p('M8 1h8v7H8z', '', '#7818e0') + p('M1.500 9.500h6v5h-6z', '#111', '#988c80') + bolt,
    ared: p('M9.500 1.500h6v6h-6z', '#111', '#888078') + p('M1 9h7v6H1z', '', '#c81030') + bolt,
    apalette: p('M3 4h13v11H3z', '', '#111') + p('M8 5h3v4H8z', '', '#30c030') + p('M12 5h3v4h-3z', '', '#e8e030') + p('M4 10h3v4H4z', '', '#30c8d8') + p('M8 10h3v4H8z', '', '#3040d8') + p('M12 10h3v4h-3z', '', '#c030c0') + bolt,
    awindow: p('M3.500 3.500h12v4h-12z', '#111', '#e88820') + p('M5.500 8.500h10v6h-10z', '#111', '#fff', 1.5) + bolt,
    adim: p('M1.500 6v9M15.500 6v9', '#778') + p('M2 10.500h13M5 8l-3 2.500 3 2.500M12 8l3 2.500-3 2.500', '#5868a0') + bolt,

    checkall: p('M1 8l3 5 6-10M6 8l2 4', G, '', 3) + p('M10 8l6 4-6 4z', '', G),
    checknone: p('M1 8l3 5 6-10', G, '', 3) + p('M9 9l6 6M15 9l-6 6', G, '', 2),
    regen: p('M0 2h10M5 2v12M3 14h5', G, '', 3) + p('M10 8l6 4-6 4z', '', G),
    regenx: p('M0 2h10M5 2v12M3 14h5', G, '', 3) + p('M10 9l5 6M15 9l-5 6', G, '', 2),
    verifyop: p('M0 0h16v16H0z', '', G),
    post: p('M0 7l6-7h7l3 3v6l-6 7H3l-3-3z', '', G),
    g1: '<text x="0" y="12" font-size="13" font-weight="bold" font-family="Liberation Serif, serif" fill="#aaa29c">G1</text>',
    feed: p('M0 2h10M5 2v12M3 14h5', G, '', 3) + p('M8 8h5M11 4l5 4-5 4z', G, G),
    tool: p('M6 12l6-6', G, '', 7) + p('M1 5l5-4 2 3M1 2l4 3', G, '', 1.5),
    ask: p('M3 5q0-4 5-4t5 4q-1 2-5 4v2M8 13v3', G, '', 3),
    lock: p('M2 6q1-6 6-6t6 6v10H2z', '', G) + p('M6 4h4', '#f5ece6'),
    waves: p('M1 5q4-3 7-1t7-1M1 9q4-3 7-1t7-1M1 13q4-3 7-1t7-1', G, '', 1.5),
    lockall: p('M1 5q1-5 7-5t7 5v11H1z', '', G) + p('M3 5q3-3 5 0 3-3 5 0', '#f5ece6'),
    tridown: p('M0 4h16l-8 8z', '', G),
    triup: p('M0 12h16L8 4z', '', G),
    insert: p('M0 2h15M1 2v8h12M9 6l4 4-4 4', G, '', 2),
    expand: p('M1 7h14L8 0zM1 9h14l-7 7z', '', G),
    wavex: p('M1 4q4-3 7-1t7-1M1 8q4-3 7-1t7-1M1 12q4-3 7-1M9 8l6 6M15 8l-7 7', G, '', 1.5),
    overlap: '<circle cx="6" cy="6" r="5" fill="none" stroke="#aaa29c" stroke-width="1.500"/>' + p('M5 7h10v8H5z', G, '', 1.5),

    chev: p('M2 5l6 6 6-6', 'currentColor', '', 4),
    down: p('M0 0h16L8 16z', '', '#000'),
    tri: p('M0 0h16L8 16z', '', '#000'),
    star: p('M8 0v16M0 8h16M3 13L13 3', 'currentColor', '', 1.5)
}

const svg = name =>
    `<svg viewBox="0 0 16 16"${name === 'down' ? ' preserveAspectRatio="none"' : ''}>${icons[name]}</svg>`

for (const bar of document.querySelectorAll('[data-tools]')) {
    bar.innerHTML = bar.dataset.tools.split(' ').map(item => {
        if ('|' === item) {
            return '<span class="sep"></span>'
        }
        const name = item.replace('+', '')
        const drop = item.endsWith('+') ? `<button type="button" class="drop" aria-label="${name} 菜单">${svg('down')}</button>` : ''
        return `<span class="tool"><button type="button" aria-label="${name}">${svg(name)}</button>${drop}</span>`
    }).join('')
}

for (const button of document.querySelectorAll('[data-icon]')) {
    button.innerHTML = svg(button.dataset.icon)
}
```
